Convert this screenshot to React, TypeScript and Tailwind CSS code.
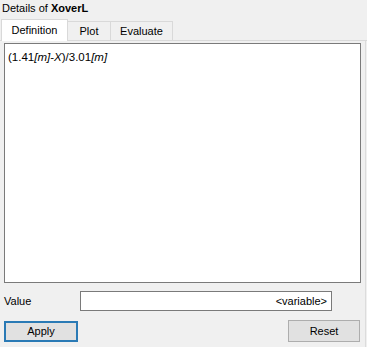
export default function App() {
  return (
    <div
      className="w-[367px] h-[347px] bg-[#f0f0f0] text-[11px] text-black overflow-hidden flex flex-col"
      style={{ fontFamily: '"Liberation Sans", Arial, sans-serif' }}
    >
      <div className="h-[19px] pl-[2px] pt-[1px] leading-[14px]">
        Details of <span className="font-bold">XoverL</span>
      </div>

      <div className="flex items-end h-[22px] pl-[1px] border-b border-[#d9d9d9]">
        <div className="h-[22px] w-[67px] bg-white border border-b-0 border-[#d9d9d9] flex items-center justify-center pb-[1px] relative top-[1px]">
          Definition
        </div>
        <div className="h-[19px] w-[43px] bg-[#f0f0f0] border border-b-0 border-l-0 border-[#d9d9d9] flex items-center justify-center">
          Plot
        </div>
        <div className="h-[19px] w-[62px] bg-[#f0f0f0] border border-b-0 border-l-0 border-[#d9d9d9] flex items-center justify-center">
          Evaluate
        </div>
      </div>

      <div className="flex-1 flex flex-col px-[4px] pt-[2px] border-r border-[#dcdcdc] mr-[1px]">
        <div className="h-[240px] bg-white border border-[#7a7a7a] px-[3px] pt-[5px] leading-[16px] text-[11.5px]">
          (1.41<i>[m]</i>-<i>X</i>)/3.01<i>[m]</i>
        </div>

        <div className="flex items-center mt-[8px] h-[20px]">
          <div className="w-[76px]">Value</div>
          <div className="w-[252px] h-[20px] bg-white border border-[#7a7a7a] flex items-center justify-end pr-[4px]">
            &lt;variable&gt;
          </div>
        </div>

        <div className="flex justify-between items-center mt-[9px]">
          <button className="w-[74px] h-[21px] bg-[#e1e1e1] border-2 border-[#2a7ab5] flex items-center justify-center">
            Apply
          </button>
          <button className="w-[72px] h-[22px] bg-[#e1e1e1] border border-[#adadad] flex items-center justify-center mr-[1px]">
            Reset
          </button>
        </div>
      </div>
    </div>
  );
}
